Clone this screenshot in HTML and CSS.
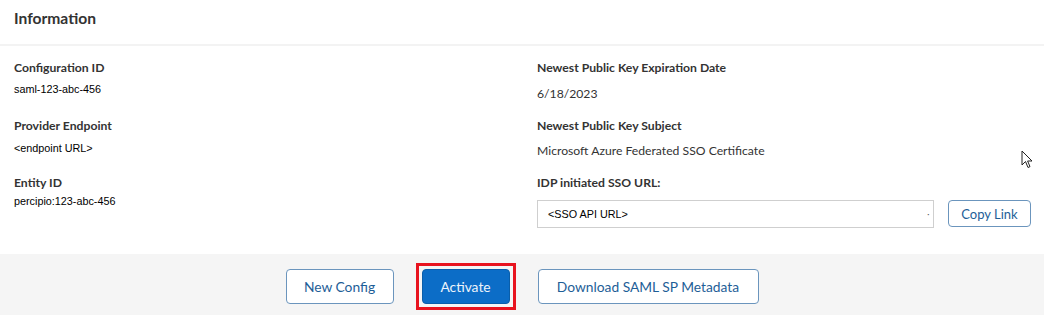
FILE: index.html
```html
<!DOCTYPE html>
<html lang="en">
<head>
	<meta charset="UTF-8">
	<title>Information</title>
	<link rel="stylesheet" href="styles.css">
</head>
<body>
<div class="panel">
	<div class="panel-head">
		<h2>Information</h2>
	</div>

	<div class="info">
		<div class="field">
			<p class="label">Configuration ID</p>
			<p class="value">saml-123-abc-456</p>
		</div>
		<div class="field">
			<p class="label">Newest Public Key Expiration Date</p>
			<p class="text">6/18/2023</p>
		</div>
		<div class="field">
			<p class="label">Provider Endpoint</p>
			<p class="value value-mid">&lt;endpoint URL&gt;</p>
		</div>
		<div class="field">
			<p class="label">Newest Public Key Subject</p>
			<p class="text text-mid">Microsoft Azure Federated SSO Certificate</p>
		</div>
		<div class="field">
			<p class="label">Entity ID</p>
			<p class="value value-tight">percipio:123-abc-456</p>
		</div>
		<div class="field">
			<p class="label">IDP initiated SSO URL:</p>
			<div class="link-row">
				<div class="link-box">&lt;SSO API URL&gt;<span class="dot">·</span></div>
				<button class="btn btn-small">Copy Link</button>
			</div>
		</div>
	</div>

	<div class="panel-foot">
		<button class="btn btn-new">New Config</button>
		<span class="highlight"><button class="btn btn-primary">Activate</button></span>
		<button class="btn btn-download">Download SAML SP Metadata</button>
	</div>

	<!-- mouse pointer left in the capture -->
	<svg class="cursor" width="12" height="19" viewBox="0 0 12 19">
		<path d="M1 1 L1 15 L4.5 11.5 L7 17.5 L9 16.6 L6.6 11 L11 11 Z" fill="#fff" stroke="#222" stroke-width="1" stroke-linejoin="round"/>
	</svg>
</div>
</body>
</html>
```

FILE: styles.css
```css
*{margin:0;padding:0;box-sizing:border-box;}
html,body{height:100%;}
body{
	font-family: Lato, "Open Sans", "Liberation Sans", sans-serif;
	color: #333;
	background-color: #fff;
}
.panel{
	position: relative;
	width: 1044px;
	height: 315px;
	overflow: hidden;
}
.panel-head{
	height: 46px;
	padding: 8px 14px 0;
	border-bottom: 2px solid #f3f3f3;
}
.panel-head h2{
	font-size: 15.6px;
	line-height: 20px;
	font-weight: 700;
	color: #333;
}
.info{
	display: grid;
	grid-template-columns: 523px 1fr;
	grid-template-rows: 58px 57px auto;
	padding: 13px 13px 26px 14px;
}
.label{
	font-size: 12.2px;
	line-height: 18px;
	font-weight: 700;
	color: #333;
}
.value{
	margin-top: 5px;
	font-family: "Liberation Sans", Arial, sans-serif;
	font-size: 10.8px;
	line-height: 14px;
	color: #000;
}
.value-mid{margin-top: 6px;}
.value-tight{margin-top: 2px;}
.text{
	margin-top: 8px;
	font-size: 12.2px;
	line-height: 18px;
	color: #333;
}
.text-mid{margin-top: 7px;}
.link-row{
	display: flex;
	align-items: flex-start;
	gap: 14px;
	margin-top: 8px;
}
.link-box{
	display: flex;
	align-items: center;
	justify-content: space-between;
	width: 397px;
	height: 28px;
	padding: 0 3px 0 10px;
	border: 1px solid #cfcfcf;
	font-family: "Liberation Sans", Arial, sans-serif;
	font-size: 10.8px;
	color: #000;
}
.link-box .dot{color: #555;}
.panel-foot{
	display: flex;
	align-items: flex-start;
	justify-content: center;
	gap: 22px;
	height: 61px;
	padding-top: 9px;
	background-color: #f5f5f5;
}
.btn{
	height: 35px;
	padding: 0;
	background-color: #fff;
	border: 1px solid #6b95bd;
	border-radius: 4px;
	font-family: Lato, "Open Sans", "Liberation Sans", sans-serif;
	font-size: 13.8px;
	color: #1e5e97;
}
.panel-foot .btn{margin-top: 6px;}
.btn-new{width: 108px;}
.btn-download{width: 221px;}
.btn-small{
	height: 27px;
	width: 83px;
	font-size: 13px;
}
.highlight{
	display: block;
	padding: 3px;
	border: 3px solid #e8131f;
}
.panel-foot .highlight .btn-primary{margin-top: 0;}
.btn-primary{
	display: block;
	width: 88px;
	background-color: #0c6dc7;
	border-color: #0a5eaa;
	color: #eef4fb;
}
.cursor{
	position: absolute;
	left: 1021px;
	top: 150px;
}
```
